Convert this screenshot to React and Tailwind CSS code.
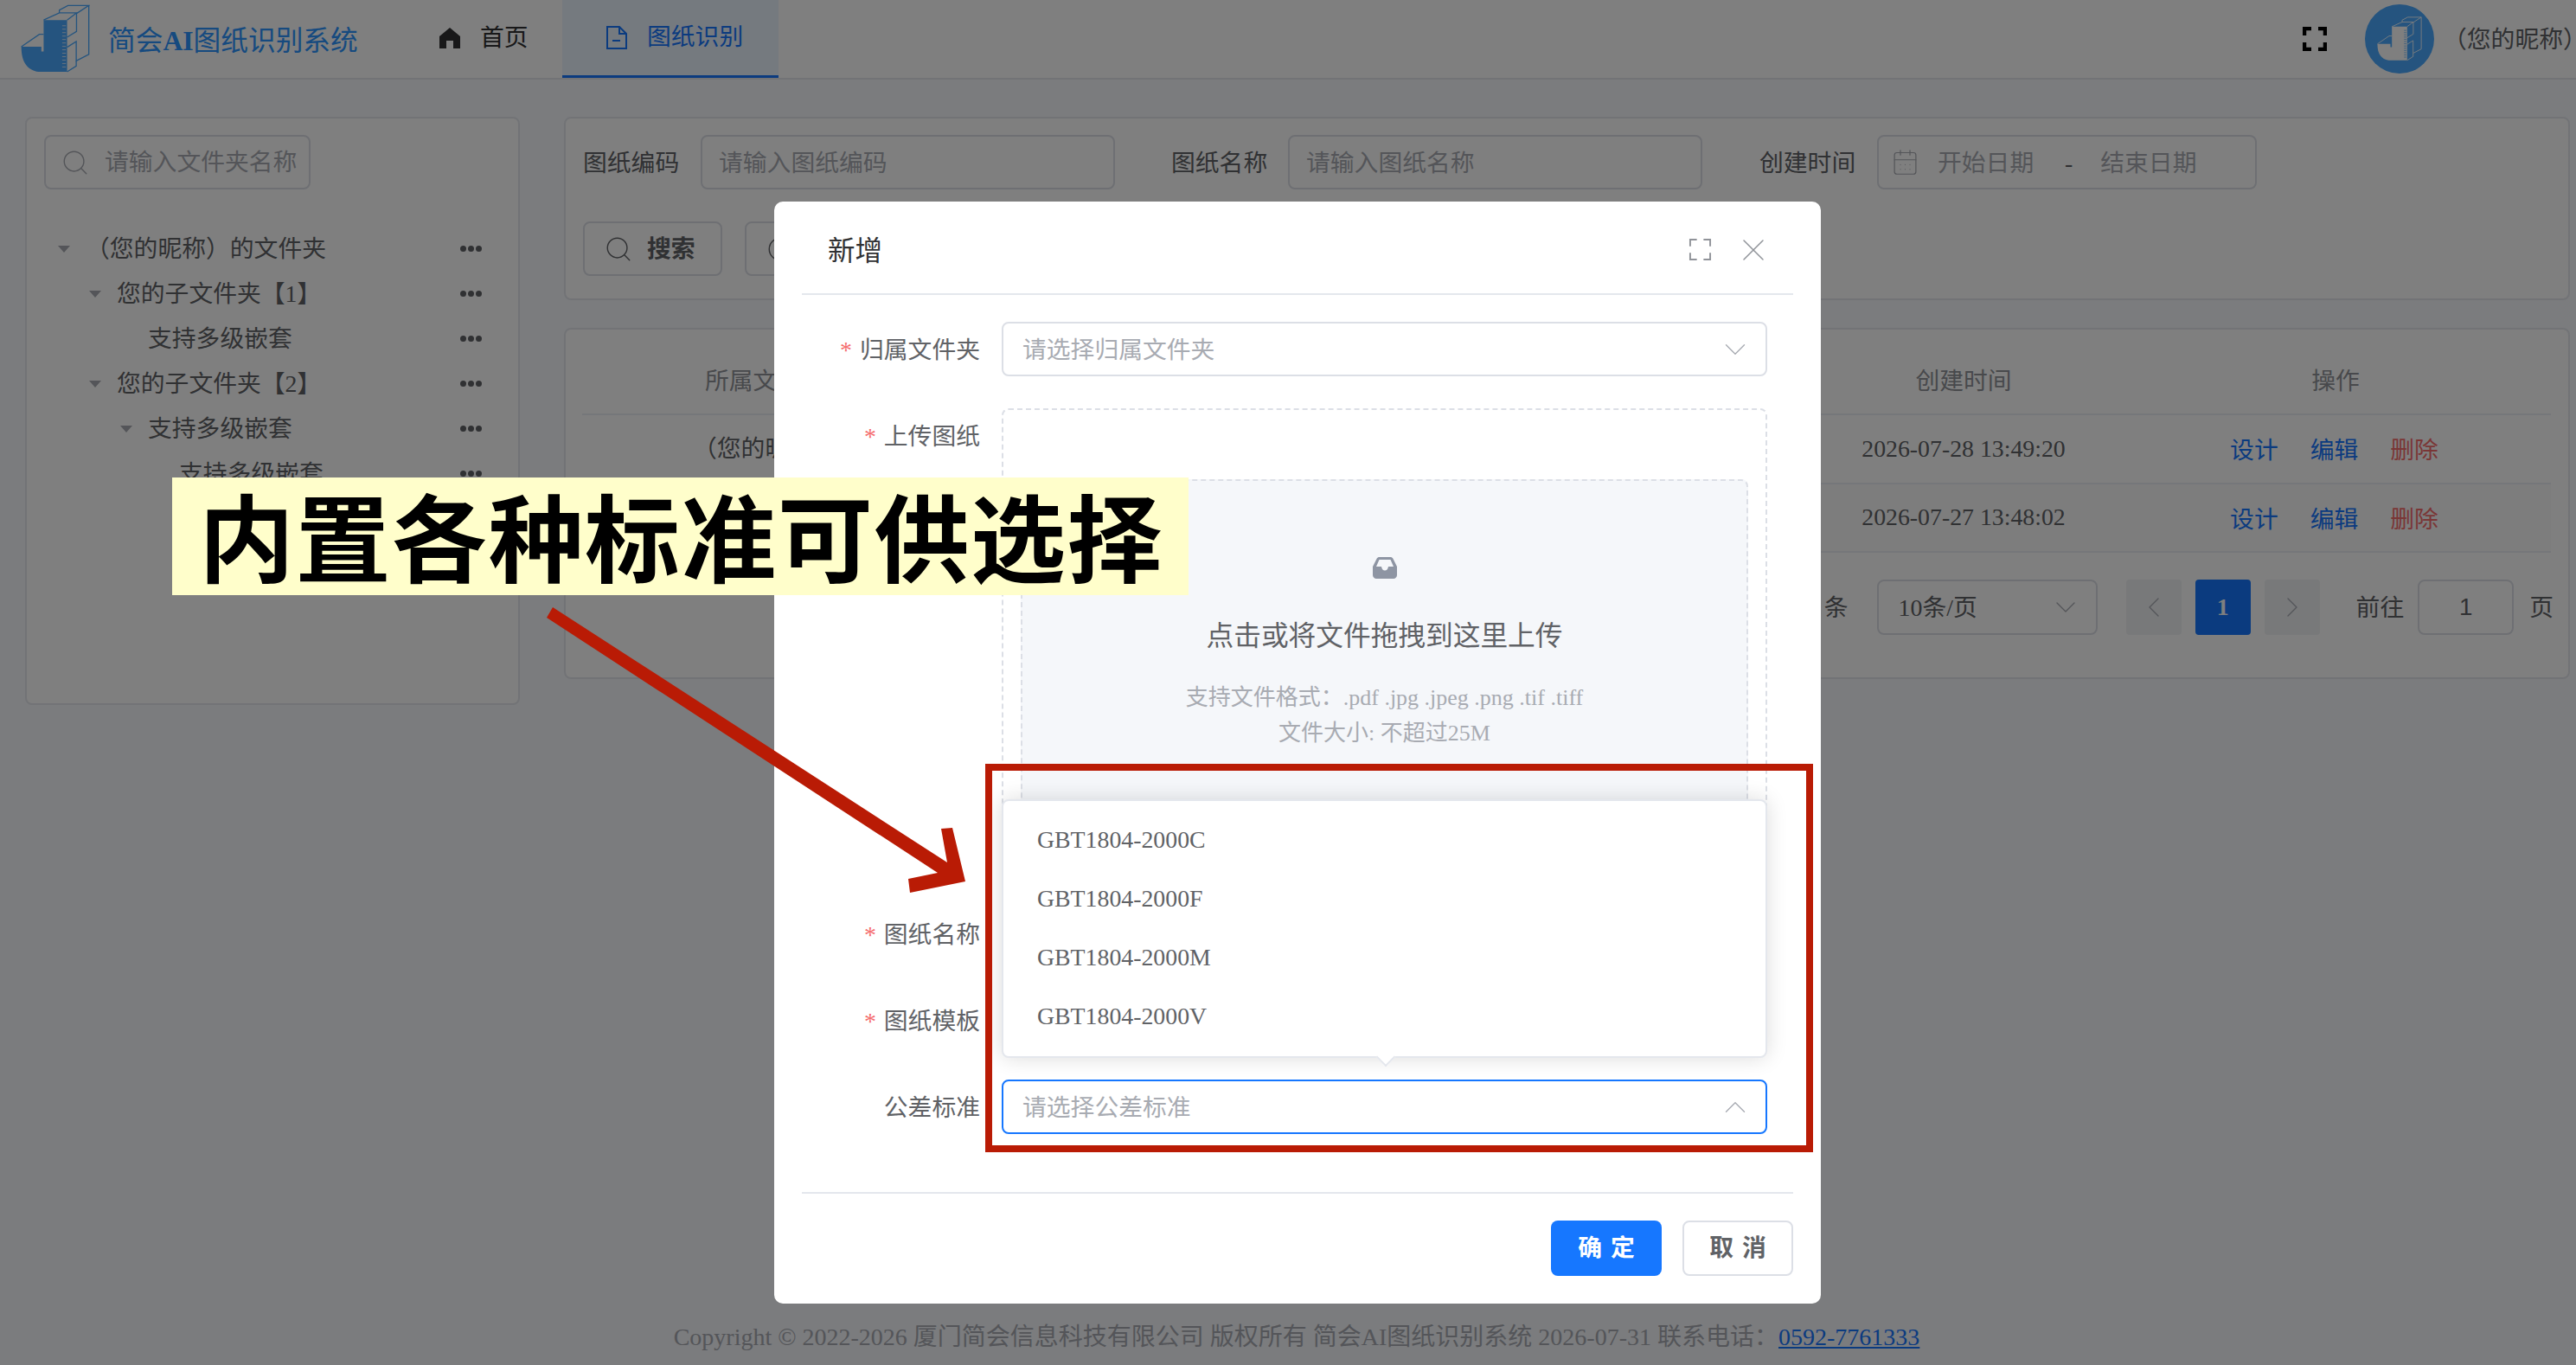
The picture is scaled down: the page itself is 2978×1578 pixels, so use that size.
import { CalendarDays, ChevronDown, ChevronLeft, ChevronRight, ChevronUp, RotateCw, Search, X } from 'lucide-react';

const treeRows = [
  { level: 0, name: '（您的昵称）的文件夹', open: true },
  { level: 1, name: '您的子文件夹【1】', open: true },
  { level: 2, name: '支持多级嵌套', open: false },
  { level: 1, name: '您的子文件夹【2】', open: true },
  { level: 2, name: '支持多级嵌套', open: true },
  { level: 3, name: '支持多级嵌套', open: false },
];

const indents = ['pl-[16px]', 'pl-[52px]', 'pl-[88px]', 'pl-[124px]'];

const tableRows = [
  { folder: '（您的昵称）的文件夹', time: '2026-07-28 13:49:20', bg: 'bg-white' },
  { folder: '您的子文件夹【1】', time: '2026-07-27 13:48:02', bg: 'bg-[#fafafa]' },
];

const standards = ['GBT1804-2000C', 'GBT1804-2000F', 'GBT1804-2000M', 'GBT1804-2000V'];

const ticks = [85, 97, 109, 121, 133, 145, 157, 169, 181, 193, 205, 217, 229];

function Logo({ className, fill, line, tick }) {
  return (
    <svg viewBox="70 10 242 242" className={className} fill="none">
      <path d="M150 65H232V246H132C95 240 72 215 72 158H142V175H150Z" fill={fill} />
      <g stroke={line} strokeWidth="4">
        <path d="M72 158L135 115H150" />
        <path d="M150 65L205 40H265L232 65" />
        <path d="M205 40V30L235 14H308L265 42V105L232 125" />
        <path d="M308 14V185L264 208V140L232 160" />
        <path d="M232 246L264 226V208" />
      </g>
      {ticks.map((y) => (
        <path key={y} d={`M215 ${y}H228`} stroke={tick} strokeWidth="3" />
      ))}
    </svg>
  );
}

function HomeIcon() {
  return (
    <svg viewBox="0 0 24 24" className="w-[24px] h-[24px] text-[#303133]" fill="currentColor">
      <path d="M12 0L24 10V24H16V15H8V24H0V10Z" />
    </svg>
  );
}

function DocIcon() {
  return (
    <svg viewBox="0 0 24 27" className="w-[24px] h-[27px] text-[#1677ff]" fill="none" stroke="currentColor" strokeWidth="2">
      <path d="M1 1H15L23 9V26H1Z" />
      <path d="M15 1V9H23" />
      <path d="M7 17H16" />
    </svg>
  );
}

function FullIcon({ className, width }) {
  return (
    <svg viewBox="0 0 28 28" className={className} fill="none" stroke="currentColor" strokeWidth={width}>
      <path d="M10 2H2V10M18 2H26V10M2 18V26H10M26 18V26H18" />
    </svg>
  );
}

function InboxIcon() {
  return (
    <svg viewBox="0 0 28 25" className="w-[28px] h-[25px]">
      <path d="M7 0H21C22 0 23 1 23.500 2L28 11V21C28 23 26 25 24 25H4C2 25 0 23 0 21V11L4.500 2C5 1 6 0 7 0Z" fill="#8e95a3" />
      <path d="M7.500 3H20.500L24 11H18C17.500 14 16 15.500 14 15.500C12 15.500 10.500 14 10 11H4Z" fill="#f5f7fa" />
    </svg>
  );
}

function Dots() {
  return (
    <div className="flex gap-[2px]">
      <div className="w-[7px] h-[7px] rounded-full bg-[#606266]" />
      <div className="w-[7px] h-[7px] rounded-full bg-[#606266]" />
      <div className="w-[7px] h-[7px] rounded-full bg-[#606266]" />
    </div>
  );
}

function FilterInput({ width, text }) {
  return (
    <div className={`${width} h-[63px] flex items-center pl-[19px] pt-[2px] border-2 border-[#dcdfe6] rounded-[8px] text-[#a8abb2]`}>
      {text}
    </div>
  );
}

function FormRow({ label, required, children }) {
  return (
    <div className="flex gap-[25px]">
      <div className="w-[238px] h-[63px] flex items-center justify-end pt-[3px] text-[#606266]">
        {required && <span className="text-[#f56c6c] mr-[9px]">*</span>}
        {label}
      </div>
      {children}
    </div>
  );
}

function SelectBox({ text, focused }) {
  return (
    <div className={`w-[885px] h-[63px] flex items-center justify-between pl-[22px] pr-[14px] border-2 rounded-[8px] text-[#a8abb2] ${focused ? 'border-[#1677ff]' : 'border-[#dcdfe6]'}`}>
      <span className="pt-[3px]">{text}</span>
      {focused
        ? <ChevronUp className="w-[42px] h-[42px] text-[#a8abb2]" strokeWidth={0.8} />
        : <ChevronDown className="w-[42px] h-[42px] text-[#a8abb2]" strokeWidth={0.8} />}
    </div>
  );
}

export default function App() {
  return (
    <div className="relative w-[2978px] h-[1578px] overflow-hidden flex flex-col bg-[#f6f8fc] text-[27.800px] leading-none text-[#606266] font-['Liberation_Serif','Noto_Sans_CJK_SC',serif]">
      <header className="h-[92px] shrink-0 flex items-stretch bg-white border-b-2 border-[#e4e7ed]">
        <div className="w-[457px] shrink-0 flex items-center pl-[24px]">
          <Logo className="w-[80px] h-[80px]" fill="#4aa9ff" line="#4aa9ff" tick="#cfe6ff" />
          <span className="ml-[21px] mt-[5px] text-[31.700px] text-[#2c94ff] whitespace-nowrap">简会<b>AI</b>图纸识别系统</span>
        </div>
        <div className="w-[193px] flex items-center gap-[23px] pl-[51px] pb-[3px] text-[#303133]">
          <HomeIcon />
          首页
        </div>
        <div className="w-[250px] flex items-center gap-[23px] pl-[51px] pb-[1px] bg-[#ebf4ff] border-b-[3px] border-[#1677ff] text-[#1677ff]">
          <DocIcon />
          图纸识别
        </div>
        <div className="ml-auto flex items-center">
          <FullIcon className="w-[28px] h-[28px] text-black" width={4.500} />
          <div className="ml-[44px] w-[80px] h-[80px] rounded-full bg-[#4aa9ff] flex items-center justify-center">
            <Logo className="w-[52px] h-[52px]" fill="#ffffff" line="#ffffff" tick="#4aa9ff" />
          </div>
          <span className="ml-[10px] mr-[14px] w-[140px] pt-[2px] whitespace-nowrap">（您的昵称）</span>
        </div>
      </header>

      <main className="flex gap-[51px] pl-[29px] pt-[43px]">
        <section className="w-[572px] h-[680px] bg-white border-2 border-[#e4e7ed] rounded-[8px] px-[20px] pt-[19px]">
          <div className="w-[308px] h-[63px] flex items-center pl-[17px] gap-[17px] border-2 border-[#dcdfe6] rounded-[8px] text-[#a8abb2]">
            <Search className="w-[34px] h-[34px]" strokeWidth={1} />
            请输入文件夹名称
          </div>
          <div className="mt-[42px]">
            {treeRows.map((row, i) => (
              <div key={i} className="relative h-[52px] flex items-center justify-between pr-[22px] whitespace-nowrap">
                <div className={`flex items-center pt-[2px] ${indents[row.level]}`}>
                  <div className="w-[32px] shrink-0">
                    {row.open && <div className="w-[14px] h-[8px] bg-[#a8abb2] [clip-path:polygon(0_0,100%_0,50%_100%)]" />}
                  </div>
                  {row.name}
                </div>
                <Dots />
              </div>
            ))}
          </div>
        </section>

        <div className="w-[2319px] flex flex-col gap-[32px]">
          <section className="h-[212px] bg-white border-2 border-[#e4e7ed] rounded-[8px] pl-[20px] pt-[19px]">
            <div className="flex items-center whitespace-nowrap">
              <span className="w-[112px] pt-[2px]">图纸编码</span>
              <div className="ml-[24px]"><FilterInput width="w-[479px]" text="请输入图纸编码" /></div>
              <span className="ml-[65px] w-[112px] pt-[2px]">图纸名称</span>
              <div className="ml-[23px]"><FilterInput width="w-[479px]" text="请输入图纸名称" /></div>
              <span className="ml-[66px] w-[112px] pt-[2px]">创建时间</span>
              <div className="ml-[24px] w-[439px] h-[63px] flex items-center pl-[14px] border-2 border-[#dcdfe6] rounded-[8px] text-[#a8abb2]">
                <CalendarDays className="w-[33px] h-[33px]" strokeWidth={0.9} />
                <span className="ml-[21px] w-[112px] pt-[2px]">开始日期</span>
                <span className="ml-[35px] pt-[2px] text-[#606266]">-</span>
                <span className="ml-[32px] pt-[2px]">结束日期</span>
              </div>
            </div>
            <div className="flex gap-[26px] mt-[37px]">
              <div className="w-[161px] h-[63px] flex items-center pl-[22px] gap-[16px] border-2 border-[#dcdfe6] rounded-[8px] font-bold">
                <Search className="w-[34px] h-[34px]" strokeWidth={1} />
                搜索
              </div>
              <div className="w-[161px] h-[63px] flex items-center pl-[22px] gap-[16px] border-2 border-[#dcdfe6] rounded-[8px] font-bold">
                <RotateCw className="w-[34px] h-[34px]" strokeWidth={1} />
                重置
              </div>
            </div>
          </section>

          <section className="h-[406px] bg-white border-2 border-[#e4e7ed] rounded-[8px] pl-[19px] pt-[19px]">
            <div className="w-[2279px]">
              <div className="w-[2276px] h-[80px] flex items-center pt-[3px] border-b-2 border-[#ebeef5] text-[#909399]">
                <div className="w-[1367px] pl-[142px]">所属文件夹</div>
                <div className="w-[460px] text-center">创建时间</div>
                <div className="w-[400px] text-center">操作</div>
              </div>
              {tableRows.map((row) => (
                <div key={row.time} className={`w-[2276px] h-[79.500px] flex items-center border-b-2 border-[#ebeef5] ${row.bg}`}>
                  <div className="w-[1367px] pl-[128px]">{row.folder}</div>
                  <div className="w-[460px] text-center">{row.time}</div>
                  <div className="w-[400px] flex justify-center gap-[37px] pt-[5px] pr-[3px]">
                    <span className="text-[#1677ff]">设计</span>
                    <span className="text-[#1677ff]">编辑</span>
                    <span className="text-[#f56c6c]">删除</span>
                  </div>
                </div>
              ))}
              <div className="mt-[31px] flex items-center justify-end">
                <span className="pt-[2px]">共 2 条</span>
                <div className="ml-[33px] w-[255px] h-[64px] flex items-center justify-between pl-[23px] pr-[15px] border-2 border-[#dcdfe6] rounded-[8px]">
                  <span className="pt-[2px]">10条/页</span>
                  <ChevronDown className="w-[40px] h-[40px] text-[#a8abb2]" strokeWidth={0.8} />
                </div>
                <div className="ml-[33px] w-[64px] h-[64px] flex items-center justify-center bg-[#f0f2f5] rounded-[4px] text-[#a8abb2]">
                  <ChevronLeft className="w-[40px] h-[40px]" strokeWidth={0.8} />
                </div>
                <div className="ml-[16px] w-[64px] h-[64px] flex items-center justify-center bg-[#1677ff] rounded-[4px] text-white font-bold">1</div>
                <div className="ml-[16px] w-[64px] h-[64px] flex items-center justify-center bg-[#f0f2f5] rounded-[4px] text-[#a8abb2]">
                  <ChevronRight className="w-[40px] h-[40px]" strokeWidth={0.8} />
                </div>
                <span className="ml-[42px] pt-[2px]">前往</span>
                <div className="ml-[16px] w-[111px] h-[64px] flex items-center justify-center border-2 border-[#dcdfe6] rounded-[8px] font-['Liberation_Sans',sans-serif]">1</div>
                <span className="ml-[18px] pt-[2px]">页</span>
              </div>
            </div>
          </section>
        </div>
      </main>

      <footer className="mt-auto h-[64px] shrink-0 flex items-center justify-center pl-[20px] text-[#a8abb2] text-[28px] whitespace-nowrap">
        Copyright © 2022-2026 厦门简会信息科技有限公司 版权所有 简会AI图纸识别系统 2026-07-31 联系电话：
        <span className="text-[#1677ff] underline">0592-7761333</span>
      </footer>

      <div className="absolute inset-0 bg-black/50" />

      <div className="absolute left-[895px] top-[233px] w-[1210px] h-[1274px] bg-white rounded-[10px]">
        <div className="mx-[32px] h-[108px] flex items-center justify-between pl-[30px] pr-[24px] pt-[5px] border-b-2 border-[#e4e7ed]">
          <span className="pt-[5px] text-[31.500px] text-[#303133]">新增</span>
          <div className="flex items-center gap-[26px] text-[#909399]">
            <FullIcon className="w-[27px] h-[27px]" width={2} />
            <X className="w-[44px] h-[44px]" strokeWidth={0.8} />
          </div>
        </div>

        <div className="mt-[31px] flex flex-col gap-[37px]">
          <FormRow label="归属文件夹" required>
            <SelectBox text="请选择归属文件夹" />
          </FormRow>
          <FormRow label="上传图纸" required>
            <div className="w-[885px] h-[539px] border-2 border-dashed border-[#dcdfe6] rounded-[8px] px-[20px] pt-[80px]">
              <div className="h-[396px] flex flex-col items-center pt-[88px] bg-[#f5f7fa] border-2 border-dashed border-[#dcdfe6] rounded-[8px]">
                <InboxIcon />
                <p className="mt-[51px] text-[31.700px] whitespace-nowrap">点击或将文件拖拽到这里上传</p>
                <p className="mt-[42px] text-[26px] text-[#a8abb2] whitespace-nowrap">支持文件格式：.pdf .jpg .jpeg .png .tif .tiff</p>
                <p className="mt-[15px] text-[26px] text-[#a8abb2] whitespace-nowrap">文件大小: 不超过25M</p>
              </div>
            </div>
          </FormRow>
          <FormRow label="图纸名称" required>
            <SelectBox text="请输入图纸名称" />
          </FormRow>
          <FormRow label="图纸模板" required>
            <SelectBox text="请选择图纸模板" />
          </FormRow>
          <FormRow label="公差标准">
            <SelectBox text="请选择公差标准" focused />
          </FormRow>
        </div>

        <div className="mx-[32px] mt-[67px] pt-[31px] border-t-2 border-[#e4e7ed] flex justify-end gap-[24px]">
          <div className="w-[128px] h-[64px] flex items-center justify-center rounded-[8px] bg-[#1677ff] text-white font-bold tracking-[10px] pl-[10px]">确定</div>
          <div className="w-[128px] h-[64px] flex items-center justify-center rounded-[8px] border-2 border-[#dcdfe6] font-bold tracking-[10px] pl-[10px]">取消</div>
        </div>

        <div className="absolute left-[263px] top-[691px] w-[885px] h-[299px] pt-[11px] bg-white border-2 border-[#e4e7ed] rounded-[8px] shadow-[0_0_24px_rgba(0,0,0,0.14)]">
          {standards.map((item) => (
            <div key={item} className="h-[68px] flex items-center pl-[39px]">{item}</div>
          ))}
          <div className="absolute left-[434px] -bottom-[9px] w-[16px] h-[16px] rotate-45 bg-white border-r-2 border-b-2 border-[#e4e7ed]" />
        </div>
      </div>

      <div className="absolute left-[1139px] top-[883px] w-[957px] h-[449px] border-8 border-[#b91b05]" />

      <div className="absolute left-[199px] top-[552px] w-[1175px] h-[136px] flex items-center pl-[31px] pb-[6px] bg-[#fffecb] text-black text-[110px] font-bold tracking-[1.500px] whitespace-nowrap font-['Noto_Sans_CJK_SC','Liberation_Sans',sans-serif]">
        内置各种标准可供选择
      </div>

      <svg className="absolute left-0 top-0 w-[2978px] h-[1578px] pointer-events-none" viewBox="0 0 2978 1578">
        <polygon points="639,702 1095,997 1088,958 1101,957 1116,1019 1052,1032 1050,1016 1084,1009 632,714" fill="#b91b05" />
      </svg>
    </div>
  );
}
